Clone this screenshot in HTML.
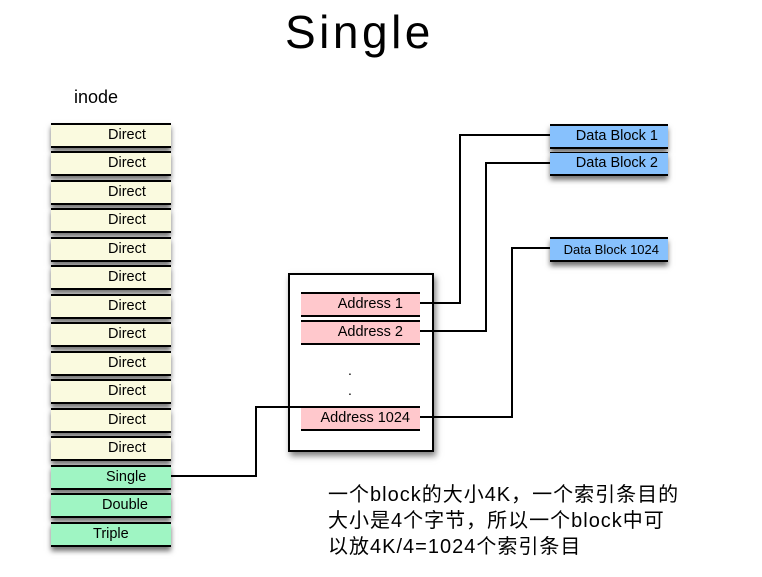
<!DOCTYPE html><html><head><meta charset="utf-8"><style>
body{margin:0;width:762px;height:577px;background:#fff;position:relative;overflow:hidden;font-family:"Liberation Sans",Arial,sans-serif}
.r{position:absolute;border-top:2px solid #000;border-bottom:2px solid #000;height:21px;box-shadow:0 4px 5px rgba(0,0,0,.55);font-size:14.5px;line-height:21px;color:#000;box-sizing:content-box}
.d{left:51px;width:120px;background:#fafadf}
.g{left:51px;width:120px;background:#9ff5c3}
.a{left:301px;width:119px;background:#ffc8cc;box-shadow:none}
.b{left:550px;width:118px;background:#87c1fd}
.l{position:absolute;background:#000}
</style></head><body>
<div style="position:absolute;left:285px;top:5px;font-size:46px;letter-spacing:3.5px">Single</div>
<div style="position:absolute;left:74px;top:87px;font-size:18px">inode</div>

<div class="r d" style="top:123px"><span style="position:absolute;left:57px">Direct</span></div>
<div class="r d" style="top:151px"><span style="position:absolute;left:57px">Direct</span></div>
<div class="r d" style="top:180px"><span style="position:absolute;left:57px">Direct</span></div>
<div class="r d" style="top:208px"><span style="position:absolute;left:57px">Direct</span></div>
<div class="r d" style="top:237px"><span style="position:absolute;left:57px">Direct</span></div>
<div class="r d" style="top:265px"><span style="position:absolute;left:57px">Direct</span></div>
<div class="r d" style="top:294px"><span style="position:absolute;left:57px">Direct</span></div>
<div class="r d" style="top:322px"><span style="position:absolute;left:57px">Direct</span></div>
<div class="r d" style="top:351px"><span style="position:absolute;left:57px">Direct</span></div>
<div class="r d" style="top:379px"><span style="position:absolute;left:57px">Direct</span></div>
<div class="r d" style="top:408px"><span style="position:absolute;left:57px">Direct</span></div>
<div class="r d" style="top:436px"><span style="position:absolute;left:57px">Direct</span></div>
<div class="r g" style="top:465px"><span style="position:absolute;left:55px">Single</span></div>
<div class="r g" style="top:493px"><span style="position:absolute;left:51px">Double</span></div>
<div class="r g" style="top:522px"><span style="position:absolute;left:42px">Triple</span></div>

<div style="position:absolute;left:288px;top:273px;width:142px;height:175px;border:2px solid #000;background:#fff;box-shadow:2px 4px 6px rgba(0,0,0,.5)"></div>
<div class="r a" style="top:292px"><span style="position:absolute;right:17px">Address 1</span></div>
<div class="r a" style="top:320px"><span style="position:absolute;right:17px">Address 2</span></div>
<div class="r a" style="top:406px"><span style="position:absolute;right:10px">Address 1024</span></div>
<div style="position:absolute;left:348px;top:360px;font-size:14px;line-height:20px">.<br>.<br>.</div>

<div class="r b" style="top:124px"><span style="position:absolute;right:10px">Data Block 1</span></div>
<div class="r b" style="top:152px;border-top-width:1px"><span style="position:absolute;right:10px">Data Block 2</span></div>
<div class="r b" style="top:237px;font-size:13px"><span style="position:absolute;right:9px">Data Block 1024</span></div>

<div class="l" style="left:171px;top:475px;width:86px;height:2px"></div>
<div class="l" style="left:255px;top:406px;width:2px;height:71px"></div>
<div class="l" style="left:255px;top:406px;width:46px;height:2px"></div>

<div class="l" style="left:420px;top:302px;width:41px;height:2px"></div>
<div class="l" style="left:459px;top:134px;width:2px;height:170px"></div>
<div class="l" style="left:459px;top:134px;width:91px;height:2px"></div>

<div class="l" style="left:420px;top:330px;width:67px;height:2px"></div>
<div class="l" style="left:485px;top:162px;width:2px;height:170px"></div>
<div class="l" style="left:485px;top:162px;width:65px;height:2px"></div>

<div class="l" style="left:420px;top:416px;width:93px;height:2px"></div>
<div class="l" style="left:511px;top:247px;width:2px;height:171px"></div>
<div class="l" style="left:511px;top:247px;width:39px;height:2px"></div>

<div style="position:absolute;left:328px;top:482px;font-size:20px;letter-spacing:1px;line-height:26px;font-family:'Liberation Sans','Noto Sans CJK SC',sans-serif">一个block的大小4K，一个索引条目的<br>大小是4个字节，所以一个block中可<br>以放4K/4=1024个索引条目</div>
</body></html>
